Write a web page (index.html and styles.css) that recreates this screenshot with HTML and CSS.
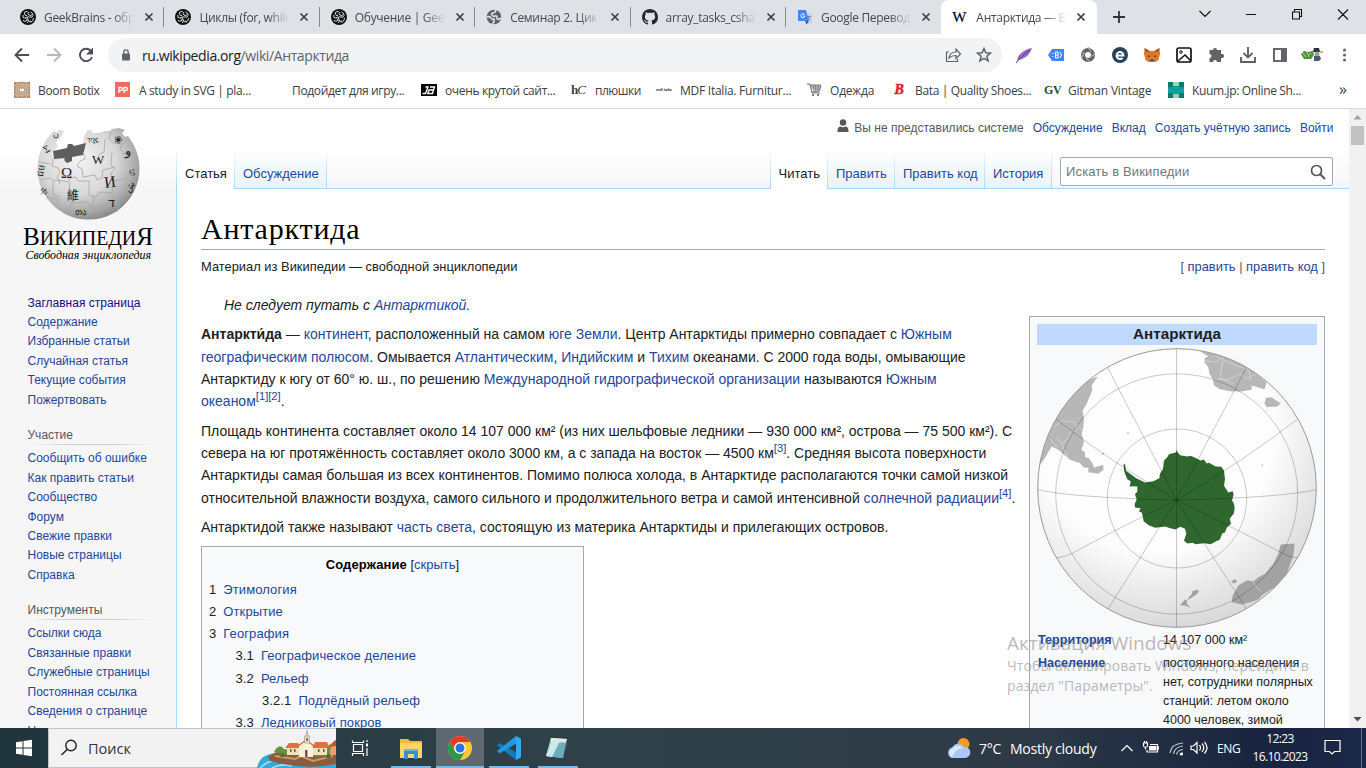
FILE: index.html
```html
<!DOCTYPE html>
<html lang="ru">
<head>
<meta charset="utf-8">
<title>Антарктида — Википедия</title>
<link rel="stylesheet" href="styles.css">
</head>
<body>
<svg class="defs" width="0" height="0">
  <symbol id="x" viewBox="0 0 10 10"><path d="M1.500 1.500l7 7M8.500 1.500l-7 7" stroke="#3c4043" stroke-width="1.700"/></symbol>
  <symbol id="geek" viewBox="0 0 16 16"><circle cx="8" cy="8" r="8" fill="#111"/><g fill="none" stroke="#e4e4e4" stroke-width="1"><path d="M7.500 2.500q-4 0-3 2.500t2.500 1.500M3 6q-1 3 1.500 3t2.500-1.500M3 11q1 2 3 1t0-2.500M7 14q2-1 1-3M9 3q-2 1.500 0 3t3-.5M10.500 3q3 1 2.500 3.500t-3.500 1.500-1.500 2.500 3 1.500M13.500 9q0 3-3 4.500"/></g></symbol>
</svg>

<div class="tabstrip">
  <div class="tab"><svg class="fav"><use href="#geek"/></svg><span class="tt">GeekBrains - обр</span><svg class="cl"><use href="#x"/></svg></div>
  <div class="tab"><svg class="fav"><use href="#geek"/></svg><span class="tt">Циклы (for, while</span><svg class="cl"><use href="#x"/></svg></div>
  <div class="tab"><svg class="fav"><use href="#geek"/></svg><span class="tt">Обучение | Geek</span><svg class="cl"><use href="#x"/></svg></div>
  <div class="tab"><svg class="fav" viewBox="0 0 16 16"><circle cx="8" cy="8" r="7.300" fill="#5f6368"/><path d="M1 8q3-1 4 1t3 1v3l-2 2M10 1q-1 3-3 3t-1 2 3 1 2 2 4 0" fill="none" stroke="#dee1e6" stroke-width="1.600"/></svg><span class="tt">Семинар 2. Цик</span><svg class="cl"><use href="#x"/></svg></div>
  <div class="tab"><svg class="fav" viewBox="0 0 16 16"><path fill="#24292e" d="M8 0C3.580 0 0 3.580 0 8c0 3.540 2.290 6.530 5.470 7.590.4.070.55-.17.55-.38 0-.19-.01-.82-.01-1.490-2.010.37-2.530-.49-2.690-.94-.09-.23-.48-.94-.82-1.130-.28-.15-.68-.52-.01-.53.63-.01 1.080.58 1.230.82.72 1.210 1.870.87 2.330.66.070-.52.28-.87.51-1.070-1.780-.2-3.640-.89-3.640-3.950 0-.87.31-1.590.82-2.150-.08-.2-.36-1.020.08-2.120 0 0 .67-.21 2.200.82.64-.18 1.320-.27 2-.27s1.360.09 2 .27c1.530-1.040 2.200-.82 2.200-.82.44 1.100.16 1.920.08 2.120.51.56.82 1.270.82 2.150 0 3.070-1.870 3.750-3.650 3.950.29.25.54.73.54 1.480 0 1.070-.01 1.930-.01 2.200 0 .21.15.46.55.38A8.010 8.010 0 0 0 16 8c0-4.420-3.580-8-8-8z"/></svg><span class="tt">array_tasks_csha</span><svg class="cl"><use href="#x"/></svg></div>
  <div class="tab last"><svg class="fav" viewBox="0 0 16 16"><path d="M7 4h8v11H9z" fill="#d5d9df"/><path d="M1 1h8l3 11H1z" fill="#4285f4"/><path d="M8 12h4l-2.500 3.500z" fill="#2a56c6"/><path d="M7.500 5.500A2 2 0 1 0 7.500 8V7H6" stroke="#fff" fill="none"/><path d="M10.500 7.500h4M12.500 6.500c0 2-1 3.500-2 4.500M11.500 8.500l2.500 3" stroke="#777f8a" fill="none" stroke-width=".8"/></svg><span class="tt">Google Перевод</span><svg class="cl"><use href="#x"/></svg></div>
  <div class="tab active"><span class="fav wfav">W</span><span class="tt">Антарктида — В</span><svg class="cl"><use href="#x"/></svg></div>
  <svg class="plus" viewBox="0 0 14 14"><path d="M7 1v12M1 7h12" stroke="#303338" stroke-width="1.800"/></svg>
  <svg class="winbtns" viewBox="0 0 160 34"><g fill="none" stroke="#111" stroke-width="1.100"><path d="M17.500 11l5.500 5.500L28.500 11M64 14.500h10M110.500 12h7v7h-7zM112.500 12v-2.500h7v7h-2M156 9.500l10 10M166 9.500l-10 10"/></g></svg>
</div>

<div class="toolbar">
  <svg class="navicons" viewBox="0 0 108 38"><g fill="none" stroke-width="1.900"><path d="M29 21H16M22 14.500L15.500 21l6.500 6.500" stroke="#4b4f54"/><path d="M47 21h13M54 14.500l6.500 6.500-6.500 6.500" stroke="#b7babd"/><path d="M90.500 16.500A6.200 6.200 0 1 0 92 23" stroke="#4b4f54"/></g><path d="M93 13.500v7h-7z" fill="#4b4f54"/></svg>
  <div class="omni">
    <svg class="lock" viewBox="0 0 10 12"><rect x="1" y="4.500" width="8" height="7" rx="1" fill="#5f6368"/><path d="M2.800 5V3a2.200 2.200 0 0 1 4.400 0v2" fill="none" stroke="#5f6368" stroke-width="1.300"/></svg>
    <span class="url"><b>ru.wikipedia.org</b>/wiki/Антарктида</span>
    <svg class="omniicons" viewBox="0 0 56 34"><g fill="none" stroke="#5f6368" stroke-width="1.200"><path d="M5 14H2.500v9.500h11V21M5 20c.5-4.500 4-6 7-6v-3l4.500 5-4.500 4.500v-3c-3 0-5 .500-7 2.500z"/><path d="M40 10.500l1.800 4.300 4.700.4-3.600 3 1.200 4.600-4.100-2.500-4.100 2.500 1.200-4.600-3.600-3 4.700-.4z" stroke-width="1.500"/></g></svg>
  </div>
  <svg class="exts" viewBox="1002 34 364 38">
    <path d="M1017 62c0-8 8-13 15-14-2 6-6 11-14 12z" fill="#9a6cc0"/><path d="M1016 63c3-4 8-9 14-13" stroke="#5d2d8c" fill="none"/>
    <path d="M1048 55l4-6h12v12h-12z" fill="#4285f4"/><path d="M1055.500 52h2.500v6h-2.500zM1055.500 55h2.500M1060 52q3 3 0 6M1053 53v1M1053 56v1" fill="none" stroke="#fff"/>
    <circle cx="1088" cy="55" r="5" fill="none" stroke="#616468" stroke-width="4"/><path d="M1088 47l3 5M1095 54l-5 3M1090 62l-4-4M1082 58l2-6" stroke="#aaa" stroke-width="1.300"/>
    <circle cx="1120" cy="55" r="8" fill="#24435c"/><path d="M1117 55.500h6.500a3.500 3.500 0 1 0-1 2.500" fill="none" stroke="#fff" stroke-width="1.900"/>
    <path d="M1144.500 48l5 3h5l5-3 .5 6-1.500 6-3 2h-7l-3-2-1.500-6z" fill="#e27625"/><path d="M1144.500 48l5 3-3 1zM1159.500 48l-5 3 3 1z" fill="#9a4c1c"/><path d="M1147 56l3 1v-1.500zM1157 56l-3 1v-1.500zM1150 61h4l-1-1.500h-2z" fill="#233447"/>
    <rect x="1177" y="48" width="14" height="14" rx="2" fill="#fff" stroke="#111" stroke-width="1.700"/><circle cx="1181" cy="52" r="1.300" fill="none" stroke="#111"/><path d="M1178 61l7-6 6 6" stroke="#111" fill="none" stroke-width="1.500"/>
    <path d="M1209.500 50h3.500a2 2 0 1 1 4 0h4v4a2.200 2.200 0 1 1 0 4v4h-4a2 2 0 1 0-4 0h-3.500v-4a2 2 0 1 0 0-4z" fill="#5f6368"/>
    <path d="M1248 47v10M1243.500 53l4.500 4.500 4.500-4.500M1241 57v5h14v-5" fill="none" stroke="#5f6368" stroke-width="1.900"/>
    <rect x="1274" y="49" width="12" height="12" fill="none" stroke="#5f6368" stroke-width="1.900"/><path d="M1281 49h5v12h-5z" fill="#5f6368"/>
    <path d="M1301 54l3-3 4 1 5-1 1 4-3 4-7 0z" fill="#4c9140"/><path d="M1303 53l3 4M1307 52l2 5M1311 53l-3 3" stroke="#b4d6a2"/><path d="M1314 48h5l1 4h-7z" fill="#27303f"/><circle cx="1317" cy="54" r="2.500" fill="#9aa09b"/><path d="M1314 56h6l1 3-2 2h-5z" fill="#4a5b70"/><path d="M1320 52h3" stroke="#d89035" stroke-width="1.500"/>
    <g fill="#5f6368"><circle cx="1344.500" cy="50" r="1.500"/><circle cx="1344.500" cy="55" r="1.500"/><circle cx="1344.500" cy="60" r="1.500"/></g>
  </svg>
</div>

<div class="bookmarks">
  <div class="bm b1"><svg viewBox="0 0 16 16"><rect width="16" height="16" fill="#b79176"/><g fill="none" stroke="#ead8c8" stroke-width=".7"><circle cx="8" cy="8" r="2"/><circle cx="8" cy="8" r="4"/><circle cx="8" cy="8" r="6"/><path d="M0 4q4 0 4-4M12 0q0 4 4 4M0 12q4 0 4 4M12 16q0-4 4-4"/></g><path d="M6 7h4v2H6z" fill="#fff"/></svg><span>Boom Botix</span></div>
  <div class="bm b2"><svg viewBox="0 0 16 16"><rect width="15" height="15" fill="#f2695f"/><path d="M4 11V5.500h2a1.500 1.500 0 0 1 0 3H4M9 11V5.500h2a1.500 1.500 0 0 1 0 3H9" fill="none" stroke="#fff" stroke-width="1.300"/></svg><span>A study in SVG | pla...</span></div>
  <div class="bm b3"><span>Подойдет для игру...</span></div>
  <div class="bm b4"><svg viewBox="0 0 16 16"><path d="M0 2h16v12H0z" fill="#000"/><path d="M1.500 11.500h3L7 5H4.500M9 5h4.500l-1 3H8l-1.200 3.500h4.700l1-3.500" fill="none" stroke="#fff" stroke-width="1.400"/></svg><span>очень крутой сайт...</span></div>
  <div class="bm b5"><i class="hc">h<em>C</em></i><span>плюшки</span></div>
  <div class="bm b6"><i class="mdf">mdf italia</i><span>MDF Italia. Furnitur...</span></div>
  <div class="bm b7"><svg viewBox="0 0 16 16"><path d="M1 2h3l2 9h8M4.500 3h10.500l-1.500 6-8 1" fill="#ccc" stroke="#777"/><path d="M7 3l1 6M9.500 3v6M12 3l-.5 6M4.500 5H15M5 7h9" stroke="#777" stroke-width=".7"/><path d="M6 13h7" stroke="#555" stroke-width="1.500" stroke-dasharray="2 3"/></svg><span>Одежда</span></div>
  <div class="bm b8"><i class="bata">B</i><span>Bata | Quality Shoes...</span></div>
  <div class="bm b9"><i class="gv">GV</i><span>Gitman Vintage</span></div>
  <div class="bm b10"><svg viewBox="0 0 16 16"><rect width="16" height="16" fill="#0aa19a"/><path d="M0 0h5v5H0zM11 0h5v5h-5zM0 11h5v5H0zM11 11h5v5h-5z" fill="#12776b"/><path d="M5 0h6v4H5zM5 12h6v4H5z" fill="#9bd0b8"/></svg><span>Kuum.jp: Online Sh...</span></div>
  <span class="more">»</span>
</div>

<div class="view">
  <div class="wiki">
    <aside class="side">
      <svg class="logo" viewBox="0 0 176 180">
        <defs>
          <radialGradient id="ball" cx=".4" cy=".35" r=".68"><stop offset="0" stop-color="#f4f4f4"/><stop offset=".55" stop-color="#d8d8d8"/><stop offset=".85" stop-color="#a7a7a7"/><stop offset="1" stop-color="#858585"/></radialGradient>
        </defs>
        <path d="M54 22A51 51 0 1 0 130 30l-2-3-3 1-3-4 3-3-6-2-7 1-2 2-6 0-1 1-6 1-4 0-2-3-4 0-1 3-2 3-1 6-1 8-29 8-1-6 6-5-2-5 4-4 4-7-5-1-3 3z" fill="url(#ball)"/>
        <path d="M53 42l14-3 1-4h4l2 2 12-3-3 12-11 2v4l-5 2-3-3 1-2-11 1z" fill="#5e5e5e"/>
        <path d="M53 50l-1 7 6 2 2 5-3 3 3 8M83 43l2 7-5 2-3 5 5 3 1 8 12-2 2 5 5-2 1-8 12-3M86 29l4 2 4 4 6-3M111 23l-2 7 4 4 9 1M105 30l-1 13-6 3M125 31l-5 8 4 6 10-1M112 43l-1 13 4 4-4 4 2 8 12-2 3-5 8 0M39 53l11 2M40 71l10-2 3 3 5-1 10 2 2-4 6-1 2 4 10 0M53 73l0 12 6 3-2 6M70 73l-2 14 5 2-1 5 15-1 3 5M89 71l0 15 7 2 4-5 12 1 1-12M112 84l1 10 6 2-2 7M94 88l-3 12M47 88l10 2M72 94l-5 10M91 100l13-3" fill="none" stroke="#a5a5a5" stroke-width=".8"/>
        <g font-family="Liberation Serif, serif" fill="#222">
          <text x="61" y="69" font-size="15">Ω</text><text x="92" y="55" font-size="13">W</text><text x="105" y="79" font-size="16" transform="rotate(-8 105 79)">И</text>
          <text x="67" y="91" font-size="12" font-family="Noto Sans CJK TC, sans-serif">維</text>
          <text x="108" y="98" font-size="13" font-family="DejaVu Sans">ד</text><text x="125" y="46" font-size="13" font-family="DejaVu Sans">و</text><text x="88" y="34" font-size="9">איו</text><text x="113" y="32" font-size="10" transform="rotate(25 113 33)">❀</text><text x="46" y="45" font-size="10" transform="rotate(-30 45 45)">Σ</text><text x="40" y="64" font-size="9" transform="rotate(-80 44 64)">ជម</text><text x="75" y="106" font-size="9">თა</text><text x="128" y="82" font-size="9" transform="rotate(-55 130 82)">ش</text><text x="53" y="28" font-size="8">ن</text><text x="131" y="66" font-size="9" transform="rotate(75 133 62)">හ</text><text x="43" y="83" font-size="8" transform="rotate(45 43 78)">中</text>
        </g>
        <g font-family="Liberation Serif, serif" fill="#000">
          <text x="23" y="136" font-size="26" textLength="130" lengthAdjust="spacingAndGlyphs">В<tspan font-size="20.500">ИКИПЕДИ</tspan>Я</text>
          <text x="25.500" y="150" font-size="12.500" font-style="italic" textLength="125.500" lengthAdjust="spacingAndGlyphs">Свободная энциклопедия</text>
        </g>
      </svg>
      <nav class="portal first"><a class="v">Заглавная страница</a><a>Содержание</a><a>Избранные статьи</a><a>Случайная статья</a><a>Текущие события</a><a>Пожертвовать</a></nav>
      <h3>Участие</h3>
      <nav class="portal"><a>Сообщить об ошибке</a><a>Как править статьи</a><a>Сообщество</a><a>Форум</a><a>Свежие правки</a><a>Новые страницы</a><a>Справка</a></nav>
      <h3>Инструменты</h3>
      <nav class="portal"><a>Ссылки сюда</a><a>Связанные правки</a><a>Служебные страницы</a><a>Постоянная ссылка</a><a>Сведения о странице</a><a>Цитировать страницу</a></nav>
    </aside>
    <div class="main">
      <div class="personal"><svg viewBox="0 0 12 14"><circle cx="6" cy="3.500" r="3.200" fill="#54595d"/><path d="M.5 13c-.3-4 1.500-5.500 3-5.500 1.500 1 3.500 1 5 0 1.500 0 3.300 1.500 3 5.500z" fill="#54595d"/></svg><span>Вы не представились системе</span><a>Обсуждение</a><a>Вклад</a><a>Создать учётную запись</a><a>Войти</a></div>
      <div class="navrow">
        <div class="vt sel">Статья</div><div class="vt t2">Обсуждение</div>
        <div class="grow"></div>
        <div class="vt sel r1">Читать</div><div class="vt r2">Править</div><div class="vt r3">Править код</div><div class="vt r4">История</div>
        <div class="search"><span>Искать в Википедии</span><svg viewBox="0 0 16 16"><circle cx="6.500" cy="6.500" r="5" fill="none" stroke="#54595d" stroke-width="1.700"/><path d="M10 10l5 5" stroke="#54595d" stroke-width="1.900"/></svg></div>
      </div>
      <div class="content">
        <h1>Антарктида</h1>
        <div class="sub"><span>Материал из Википедии — свободной энциклопедии</span><span class="ed">[ <a>править</a> | <a>править код</a> ]</span></div>
        <div class="cols">
          <div class="text">
            <div class="hat">Не следует путать с <a>Антарктикой</a>.</div>
            <p><b>Антаркти́да</b> — <a>континент</a>, расположенный на самом <a>юге</a> <a>Земли</a>. Центр Антарктиды примерно совпадает с <a>Южным<br>географическим полюсом</a>. Омывается <a>Атлантическим</a>, <a>Индийским</a> и <a>Тихим</a> океанами. С 2000 года воды, омывающие<br>Антарктиду к югу от 60° ю. ш., по решению <a>Международной гидрографической организации</a> называются <a>Южным<br>океаном</a><sup>[1][2]</sup>.</p>
            <p>Площадь континента составляет около 14 107 000 км² (из них шельфовые ледники — 930 000 км², острова — 75 500 км²). С<br>севера на юг протяжённость составляет около 3000 км, а с запада на восток — 4500 км<sup>[3]</sup>. Средняя высота поверхности<br>Антарктиды самая большая из всех континентов. Помимо полюса холода, в Антарктиде располагаются точки самой низкой<br>относительной влажности воздуха, самого сильного и продолжительного ветра и самой интенсивной <a>солнечной радиации</a><sup>[4]</sup>.</p>
            <p>Антарктидой также называют <a>часть света</a>, состоящую из материка Антарктиды и прилегающих островов.</p>
            <div class="toc">
              <div class="toch"><b>Содержание</b> [<a>скрыть</a>]</div>
              <div class="ti">1<a>Этимология</a></div><div class="ti">2<a>Открытие</a></div><div class="ti">3<a>География</a></div>
              <div class="ti l2">3.1<a>Географическое деление</a></div><div class="ti l2">3.2<a>Рельеф</a></div><div class="ti l3">3.2.1<a>Подлёдный рельеф</a></div><div class="ti l2">3.3<a>Ледниковый покров</a></div>
            </div>
          </div>
          <div class="info">
            <div class="ih">Антарктида</div>
            <svg class="globe" viewBox="1037 347.500 280 280">
              <defs><radialGradient id="sea" cx=".42" cy=".3" r=".78"><stop offset="0" stop-color="#fff"/><stop offset=".55" stop-color="#fdfdfd"/><stop offset="1" stop-color="#cfcfcf"/></radialGradient>
              <clipPath id="disc"><circle cx="1177" cy="487.500" r="139.500"/></clipPath></defs>
              <circle cx="1177" cy="487.500" r="139.300" fill="url(#sea)"/>
              <g clip-path="url(#disc)">
              <g transform="translate(1020 310) scale(.33333)" fill="#b7b7b7">
                <path d="M233 198L190 215 100 320 50 400 50 475 70 450 95 408 115 418 150 448 180 458 192 472 205 472 205 485 235 490 250 478 250 463 235 467 222 472 218 460 205 442 195 440 195 425 184 418 192 395 185 370 190 350 192 325 188 300 200 280 208 260 217 240 215 225z"/>
                <path d="M540 122L600 125 660 150 740 215 733 237 715 230 695 225 695 238 665 243 630 242 600 236 582 225 578 205 568 190 565 170 553 155 555 142 565 138z"/>
                <path d="M733 278L738 262 755 260 765 268 782 278 772 288 740 290z"/>
                <path d="M782 702L824 699 820 735 800 790 770 825 725 855 715 867 690 875 665 882 635 875 638 855 655 825 680 810 700 812 715 800 735 790 760 760 775 730z" fill="#a2a2a2"/>
                <path d="M633 812L645 806 652 812 642 820zM517 842L530 838 537 840 532 850 515 862 502 869 508 858 515 852zM495 867L502 870 500 880 512 892 495 885 480 884z" fill="#a2a2a2"/>
                <path d="M320 366h8v3h-8zM244 430l8-5-3 9zM724 460l5 4-2 6z"/>
                <g fill="none" stroke="#dedede" stroke-width="2"><path d="M100 350l25-20 40 5 5 25-20 5-5 20-20 15-15-20M90 385l20 25M125 400l20 45M170 340l15 20M555 150l30 5 25-15-10 65 20 5 40-20 20 15 40-20M600 145l-15-12M612 150l75 30 5 30M580 207l30-2 30 15M700 810l5 15 18 18"/></g>
              </g>
              <path transform="translate(1020 310) scale(.33333)" fill="#30672f" d="M468 418l1 7-22 6-6 10-9 9-3 25-9 15-2 13-18 9-25 4-25-12-20-14-12-10-3-20-4 2 1 18 5 14 5 12 10 6-3 17 8-2 15 1v15l-7 8 5 15-6 15 1 10 17 2-5 9 9 5 5 25 15 12 20 8 30-4 10 4 20 5 15-8 14 6 4 14-7 22 10 8 15-2 10 4 25-3 20 3 15-8 12-5 8-20 8-2 5-14 13-12-4-15 12-15 3-15-2-15-6-10 5-18-3-10-13 4-13-20 3-20-3-25-8-12-17-1-20-11-7 2-8-12-10 3-20-10-10-4-10 2-22-4z"/>
              <g fill="none" stroke="#000" stroke-opacity=".27" stroke-width=".8"><ellipse cx="1177" cy="498" rx="69.700" ry="69.500"/><ellipse cx="1176.700" cy="493.500" rx="121" ry="120.200"/><path d="M1176.500 348v279M1176.500 499.500L1107.500 367M1176.500 499.500L1246.500 367M1176.500 499.500Q1110 461 1056 418.500M1176.500 499.500Q1243 461 1297.700 418.500M1176.500 499.500Q1070 497 1037 489M1176.500 499.500Q1284 497 1317 489M1176.500 499.500Q1110 532 1072 553Q1060 558 1056 557M1176.500 499.500Q1243 532 1283 553Q1293 558 1298 557M1176.500 499.500L1108 608.500M1176.500 499.500L1246.500 608.500"/></g>
              </g>
              <circle cx="1177" cy="487.500" r="139.300" fill="none" stroke="#999" stroke-width="1"/>
            </svg>
            <div class="row"><b>Территория</b><span>14 107 000 км²</span></div>
            <div class="row"><b>Население</b><span>постоянного населения<br>нет, сотрудники полярных<br>станций: летом около<br>4000 человек, зимой</span></div>
          </div>
        </div>
      </div>
    </div>
  </div>
  <div class="sb"><svg viewBox="0 0 17 17"><path d="M4.500 10.500l4-4.500 4 4.500z" fill="#a3a3a3"/></svg><div class="thumb"></div><svg class="dn" viewBox="0 0 17 17"><path d="M4.500 6l4 4.500 4-4.500z" fill="#505050"/></svg></div>
</div>

<div class="mark"><div class="m1">Активация Windows</div><div class="m2">Чтобы активировать Windows, перейдите в</div><div class="m3">раздел "Параметры".</div></div>

<div class="taskbar">
  <svg class="start" viewBox="0 0 48 40"><path d="M16 14.200l6.500-1v6.300H16zM23.500 13l8.500-1.200v7.700h-8.500zM16 20.500h6.500v6.300l-6.500-1zM23.500 20.500H32v7.700L23.500 27z" fill="#fff"/></svg>
  <div class="find"><svg class="mag" viewBox="0 0 18 18"><circle cx="11" cy="6.500" r="5.200" fill="none" stroke="#222" stroke-width="1.400"/><path d="M7.300 10.200L1.500 16" stroke="#222" stroke-width="1.500"/></svg><span>Поиск</span>
    <svg class="town" viewBox="257 728 79 39"><path d="M257 767c2-10 8-14 20-15l59 10v5z" fill="#36a9d8"/><path d="M260 767q10-10 25-8l10 3M272 767q10-5 20-2" stroke="#a4e0f3" fill="none" stroke-width="1.500"/><path d="M268 756q8-7 18-6h50v13q-20 4-38 2t-28-5z" fill="#8a5b3c"/><path d="M275 755l20 3 6-3 12 5 20-5" stroke="#c79a6c" fill="none" stroke-width="2"/><path d="M275 749q5-7 9-1l20 3 20-1q8-12 12-5v9q-30 4-62-3z" fill="#6a9140"/><path d="M287 745h40v9h-40z" fill="#f2dfc2"/><path d="M285 747l4-5h9l3 5zM312 747l3-6h12l3 6z" fill="#e0703d"/><path d="M299 745l7-5 7 5v11h-14z" fill="#fff0da"/><path d="M298 745l8-6 8 6" stroke="#d0683b" fill="none" stroke-width="1.200"/><path d="M304.500 735h5v7h-5zM305.500 735l1.500-4 1.500 4" fill="#eadac6" stroke="#8c8378" stroke-width=".5"/><path d="M307 729v3" stroke="#777" stroke-width=".7"/><path d="M305 749h2.500v7h-2.500zM290 748h1.500v3h-1.500zM294 748h1.500v3h-1.500zM318 748h1.500v3h-1.500zM323 748h1.500v3h-1.500zM306.300 737h1.500v3h-1.500z" fill="#745447"/><path d="M330 749l3-8 3-2v15h-6z" fill="#e9a06d"/><path d="M329 746l5-6 2-1v6z" fill="#c9552f"/><path d="M280 756q3-8 5 0M325 757q4-9 6 0" fill="#457632"/></svg>
  </div>
  <svg class="apps" viewBox="336 728 260 40">
    <path d="M436 728h48v40h-48z" fill="#5d696e"/>
    <g fill="none" stroke="#fff" stroke-width="1.200"><path d="M353.500 744.500h9v7h-9zM352.500 740.500v2h11v-2M352.500 756v-2.500h11v2.500M367 740v2M367 748v8"/></g><path d="M366 743.500h2v3h-2z" fill="#fff"/>
    <path d="M400 739h8l2 2h12v17h-22z" fill="#f0b93a"/><path d="M400 743h22v15h-22z" fill="#fbd667"/><path d="M404 759v-10h14v10h-4v-5h-6v5z" fill="#3a8ed0"/><path d="M404 749h14v2h-14z" fill="#6cb5e8"/>
    <circle cx="460" cy="748" r="12" fill="#fcc934"/><path d="M449.600 742A12 12 0 0 1 470.400 742H460a6 6 0 0 0-5 9z" fill="#e33b2e"/><path d="M449.600 742A12 12 0 0 0 460 760l5.200-9a6 6 0 0 1-10.400 0z" fill="#259c4c"/><circle cx="460" cy="748" r="5.800" fill="#fff"/><circle cx="460" cy="748" r="4.500" fill="#2b71e3"/>
    <path d="M499.500 743l-2.500 2.500L516 760l1-7z" fill="#1479bd"/><path d="M516 736l-19 15 2.500 2.500L517 743z" fill="#2198e4"/><path d="M516 736l5 2.500v19l-5 2.500z" fill="#35a8f0"/>
    <path d="M551 738l16 1-4 19-17-2z" fill="#b8dce0"/><path d="M551 742l15 1-3 15-17-2z" fill="#69aebc"/><path d="M552 740l8 1-8 16-6-1z" fill="#cde8e8"/><path d="M551 738l16 1-.5 2.500-16-1z" fill="#e7e9e4"/><path d="M563 758l5-13-1-6z" fill="#3e4c53"/>
    <path d="M391 766h40v2h-40zM436 766h48v2h-48zM489 766h40v2h-40zM538 766h40v2h-40z" fill="#76b9ed"/>
  </svg>
  <div class="spacer"></div>
  <svg class="weather" viewBox="0 0 26 22"><circle cx="17.500" cy="7" r="6" fill="#f59a23"/><path d="M6 21a5.500 5.500 0 0 1 0-10.500A7 7 0 0 1 18 10a5.500 5.500 0 1 1 1.500 11z" fill="#a9c9f7"/><path d="M6 20a4.500 4.500 0 0 1 1-8.500A6 6 0 0 1 17 11.500q-7-1-11 8.500z" fill="#dbe9fd"/></svg>
  <span class="deg">7°C</span><span class="cloudy">Mostly cloudy</span>
  <svg class="tray" viewBox="1116 728 96 40"><g fill="none" stroke="#fff" stroke-width="1.200"><path d="M1121.500 751l5.500-5.500 5.500 5.500"/><path d="M1150 744.500h7.500v7.500h-10.500v-2M1143.500 743v3q2 3 4 0v-3zM1144.500 741v2M1146.500 741v2M1145.500 747.500v2"/><path d="M1170 753q1-9 13-10M1173.500 754q1-7 9.500-8M1176.500 754.500q1-4.500 6.500-5M1180 755q.5-2 3-2" stroke="#b9c3c8"/><path d="M1191 746h2.500l3.500-3.500v10.500l-3.500-3.500H1191zM1199.500 745q2 2.500 0 5.500M1202 743.500q3.500 4 0 8.500M1204.500 742q5 5.500 0 11.500"/></g><path d="M1149 746h7.500v4.500h-7.500zM1158 746.500h1v3h-1z" fill="#fff"/><circle cx="1181.500" cy="754" r="1.500" fill="#fff"/></svg>
  <span class="lang">ENG</span>
  <div class="clock"><span class="c1">12:23</span><span class="c2">16.10.2023</span></div>
  <svg class="note" viewBox="0 0 18 18"><path d="M1 1.500h15v11h-5.500l-2.500 2.500-2.500-2.500H1z" fill="none" stroke="#fff" stroke-width="1.200"/></svg>
  <div class="peek"></div>
</div>
</body>
</html>
```
FILE: styles.css
```css
* { box-sizing: border-box; }
body { margin: 0; width: 1366px; height: 768px; overflow: hidden; display: flex; flex-direction: column; background: #fff; font-family: "Liberation Sans", Arial, sans-serif; position: relative; }
svg { display: block; flex: none; }
.defs { position: absolute; }

/* browser tabs */
.tabstrip { height: 34px; flex: none; background: #dee1e6; display: flex; align-items: center; padding-left: 9px; font: 12px "Open Sans", "Noto Sans", sans-serif; color: #45494d; }
.tab { width: 155.400px; height: 34px; display: flex; align-items: center; padding-left: 11px; position: relative; flex: none; }
.tab::after { content: ""; position: absolute; right: 0; top: 7px; width: 1px; height: 20px; background: #85898e; }
.tab.last::after, .tab.active::after { display: none; }
.fav { width: 16px; height: 16px; margin-right: 8px; flex: none; }
.wfav { font: 15px/16px "Liberation Serif", serif; color: #000; -webkit-text-stroke: .2px #000; }
.tt { width: 90px; overflow: hidden; white-space: nowrap; letter-spacing: -.3px; -webkit-mask-image: linear-gradient(90deg, #000 76%, transparent 100%); mask-image: linear-gradient(90deg, #000 76%, transparent 100%); }
.cl { width: 10px; height: 10px; margin-left: 10px; }
.tab.active { background: #fff; border-radius: 8px 8px 0 0; }
.plus { width: 14px; height: 14px; margin-left: 15px; }
.winbtns { width: 160px; height: 34px; margin-left: 56px; overflow: visible; }

/* address row */
.toolbar { height: 38px; flex: none; display: flex; align-items: center; }
.navicons { width: 108px; height: 38px; }
.omni { width: 894px; height: 34px; margin-top: 4px; border-radius: 17px; background: #f1f3f4; display: flex; align-items: center; padding-left: 13px; flex: none; }
.lock { width: 10px; height: 12px; }
.url { margin-left: 11px; font: 14px "Open Sans", "Noto Sans", sans-serif; color: #5f6368; letter-spacing: -.4px; flex: 1; }
.url b { font-weight: 400; color: #202124; }
.omniicons { width: 56px; height: 34px; margin-right: 2px; }
.exts { width: 364px; height: 38px; }

/* bookmarks */
.bookmarks { height: 37px; flex: none; border-bottom: 1px solid #d6d8db; display: grid; grid-template-columns: 101px 177px 129px 150px 85px 150px 85px 153px 124px 168px 1fr; align-items: center; padding-left: 14px; font: 12px "Open Sans", "Noto Sans", sans-serif; color: #3c4043; }
.bm { display: flex; align-items: center; white-space: nowrap; letter-spacing: -.35px; }
.b6 span { letter-spacing: -.25px; }
.b5 span, .b7 span { letter-spacing: -.5px; }
.b7 span, .b9 span { letter-spacing: -.2px; }
.bm svg, .bm i { width: 16px; height: 16px; margin-right: 8px; flex: none; }
.hc { font: bold 13px/16px "Liberation Serif", serif; letter-spacing: -1px; }
.hc em { font-weight: 400; font-style: italic; }
.mdf { font: bold 4px/16px "Liberation Sans", sans-serif; letter-spacing: -.2px; }
.bata { font: italic bold 14px/16px "Liberation Serif", serif; color: #e0212f; text-align: center; -webkit-text-stroke: .5px #e0212f; }
.gv { font: bold 12px/16px "Liberation Serif", serif; color: #24502c; }
.more { font-size: 16px; line-height: 20px; margin: -3px 0 0 3px; }

/* encyclopedia page */
.view { height: 619px; flex: none; display: flex; overflow: hidden; }
.wiki { width: 1349px; display: flex; background: linear-gradient(#fff 50%, #f6f6f6) 0 0 / 100% 80px no-repeat #f6f6f6; overflow: hidden; flex: none; }
a { color: #1f479c; }
.side { width: 176px; flex: none; font-size: 12px; }
.logo { width: 176px; height: 180px; }
.portal { display: flex; flex-direction: column; padding-left: 27.500px; }
.portal a { line-height: 19.450px; white-space: nowrap; }
.portal.first { padding-top: 4.500px; }
.portal a.v { color: #1b0a80; }
.side h3 { margin: 15.500px 22px 4.500px 27.500px; height: 19px; line-height: 18px; font-size: 12px; font-weight: 400; color: #54595d; background: linear-gradient(90deg, rgba(200,204,209,0), #c8ccd1 33%, #c8ccd1 66%, rgba(200,204,209,0)) 0 100% / 100% 1px no-repeat; }
.main { flex: 1; min-width: 0; display: flex; flex-direction: column; }
.personal { height: 39px; display: flex; justify-content: flex-end; gap: 9.100px; padding-right: 15.500px; line-height: 38px; font-size: 12px; white-space: nowrap; color: #54595d; flex: none; }
.personal svg { width: 12px; height: 14px; margin: 10px -4px 0 0; }
.navrow { height: 41px; flex: none; display: flex; background: linear-gradient(#a7d7f9, #a7d7f9) 0 100% / 100% 1px no-repeat, linear-gradient(rgba(167,215,249,0), #a7d7f9) 0 0 / 1px 100% no-repeat; padding-left: 1px; }
.vt { height: 41px; font-size: 13px; line-height: 52px; padding-left: 8px; white-space: nowrap; color: #1f479c; background: linear-gradient(rgba(167,215,249,0), #a7d7f9) 100% 0 / 1px 100% no-repeat, linear-gradient(#a7d7f9, #a7d7f9) 0 100% / 100% 1px no-repeat, linear-gradient(#fff, #e8f2f8); flex: none; }
.vt.sel { width: 58px; color: #202122; background: linear-gradient(rgba(167,215,249,0), #a7d7f9) 100% 0 / 1px 100% no-repeat, #fff; }
.t2 { width: 92px; }
.grow { flex: 1; background: linear-gradient(rgba(167,215,249,0), #a7d7f9) 100% 0 / 1px 100% no-repeat; }
.vt.r1 { width: 57px; padding-left: 7.500px; }
.r2 { width: 67px; }
.r3 { width: 90px; }
.r4 { width: 67px; }
.search { width: 273px; height: 29px; margin: 9px 16px 0 8px; border: 1px solid #a2a9b1; border-radius: 2px; background: #fff; display: flex; align-items: center; justify-content: space-between; padding: 0 6px 0 5px; font-size: 13px; letter-spacing: .15px; color: #72777d; flex: none; }
.search svg { width: 16px; height: 16px; }
.content { flex: 1; background: #fff; border-left: 1px solid #a7d7f9; padding: 20px 24px 0; min-height: 0; }
h1 { margin: 0; height: 41px; border-bottom: 1px solid #a2a9b1; font: 30px/39px "Liberation Serif", serif; letter-spacing: .8px; color: #000; }
.sub { display: flex; justify-content: space-between; font-size: 12.900px; line-height: 34px; height: 34px; color: #202122; }
.ed { font-size: 12.900px; color: #54595d; }
.cols { display: flex; justify-content: space-between; color: #202122; }
.text { width: 815px; flex: none; font-size: 14px; line-height: 22.300px; white-space: nowrap; padding-top: 10px; }
.hat { font-style: italic; padding-left: 23px; margin-bottom: 7px; }
p { margin: 0 0 7.300px; }
sup { font-size: 11.200px; line-height: 1; vertical-align: super; color: #1f479c; }
.toc { width: 383px; height: 220px; border: 1px solid #a2a9b1; background: #f8f9fa; padding: 7px; font-size: 13px; margin-top: 7px; }
.toch { text-align: center; height: 25px; line-height: 21px; }
.toch b { color: #000; letter-spacing: .1px; }
.ti { display: flex; gap: 7px; line-height: 22.200px; letter-spacing: .1px; }
.l2 { padding-left: 26.500px; }
.l3 { padding-left: 53px; }
.info { width: 296px; height: 430px; margin-top: 32px; border: 1px solid #a2a9b1; background: #f8f9fa; padding: 7px; flex: none; font-size: 12.500px; }
.ih { height: 21px; background: #c0d9ff; text-align: center; font-weight: 700; font-size: 15.200px; line-height: 20px; margin-bottom: 3px; }
.globe { width: 280px; height: 280px; }
.row { display: grid; grid-template-columns: 125px 160px; line-height: 19px; padding: 2.500px 0 2px 1px; }
.row b { color: #1f479c; font-size: 12.600px; }
.row span { white-space: nowrap; }

.sb { width: 17px; background: #f1f1f1; display: flex; flex-direction: column; }
.sb svg { width: 17px; height: 17px; }
.thumb { width: 13px; height: 19px; background: #c1c1c1; margin-left: 2px; }
.dn { margin-top: auto; }

/* activation notice */
.mark { position: absolute; left: 1007px; top: 630px; font-family: "Open Sans", "Noto Sans", sans-serif; color: rgba(120, 120, 120, .52); white-space: nowrap; }
.m1 { font-size: 19px; line-height: 26px; }
.m2, .m3 { font-size: 14px; line-height: 20px; letter-spacing: .1px; }

/* taskbar */
.taskbar { height: 40px; flex: none; display: flex; align-items: center; background: linear-gradient(90deg, #20363c, #2f4148 40%, #2d3a46 75%, #192440 92%, #1b2746); color: #fff; font: 14px "Open Sans", "Noto Sans", sans-serif; }
.start { width: 48px; height: 40px; }
.find { width: 288px; height: 40px; background: #f2f2f2; border: 1px solid #c4c4c4; border-right: 0; display: flex; align-items: center; padding-left: 11px; color: #333; font-size: 14.500px; flex: none; }
.mag { width: 18px; height: 18px; }
.find span { margin-left: 10px; flex: 1; }
.town { width: 79px; height: 39px; }
.apps { width: 260px; height: 40px; }
.spacer { flex: 1; }
.weather { width: 26px; height: 22px; margin: 0 7px 0 -1px; }
.deg { width: 31px; letter-spacing: -.2px; }
.cloudy { width: 106px; letter-spacing: -.25px; white-space: nowrap; }
.tray { width: 96px; height: 40px; }
.lang { font-size: 12px; width: 33px; padding-left: 5px; letter-spacing: -.3px; }
.clock { width: 70px; display: flex; flex-direction: column; align-items: center; font-size: 12px; line-height: 18px; letter-spacing: -.6px; }
.note { width: 18px; height: 18px; margin-left: 9px; }
.peek { width: 5px; height: 40px; border-left: 1px solid #66718a; margin-left: 19px; }
```
